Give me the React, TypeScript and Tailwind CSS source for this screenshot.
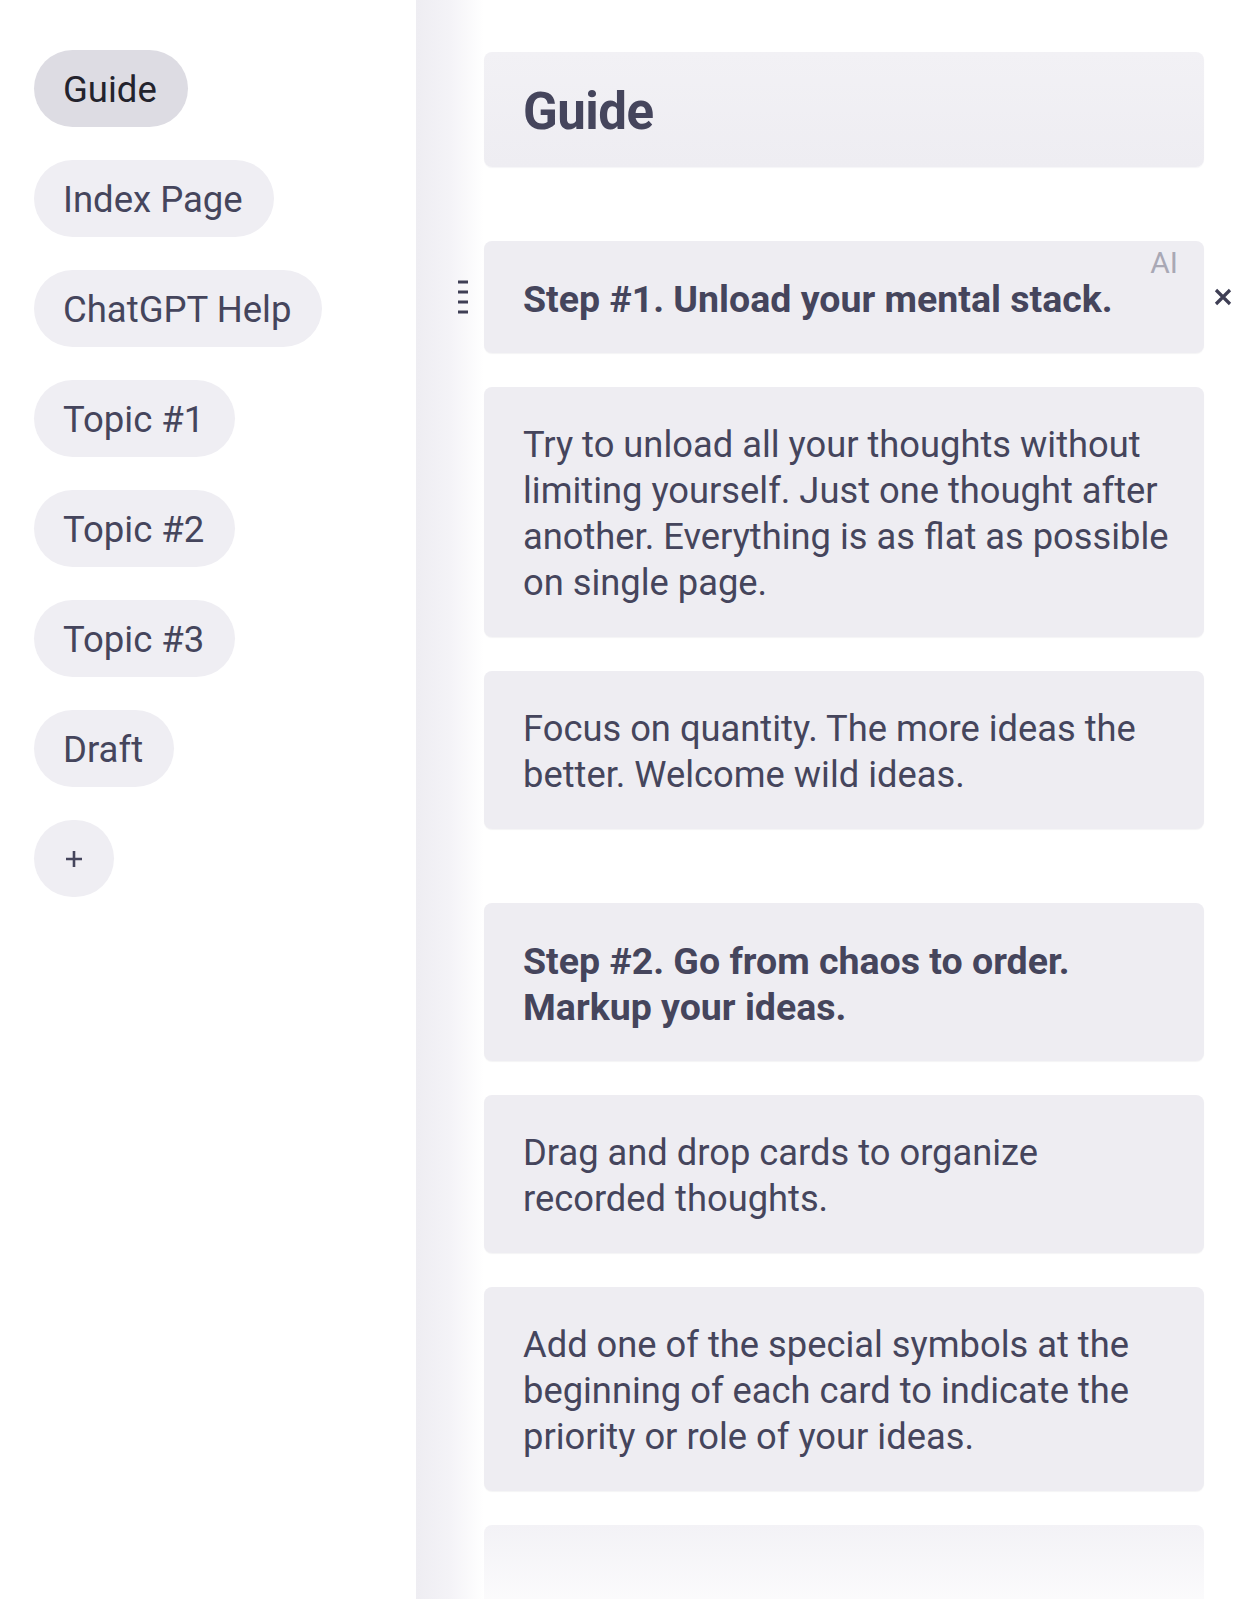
import React from 'react';

const pages = ['Guide', 'Index Page', 'ChatGPT Help', 'Topic #1', 'Topic #2', 'Topic #3', 'Draft'];

type Card = {
  lines: string[];
  bold?: boolean;
  gapBefore?: boolean;
  active?: boolean;
};

const cards: Card[] = [
  { lines: ['Step #1. Unload your mental stack.'], bold: true, gapBefore: true, active: true },
  {
    lines: [
      'Try to unload all your thoughts without',
      'limiting yourself. Just one thought after',
      'another. Everything is as flat as possible',
      'on single page.',
    ],
  },
  { lines: ['Focus on quantity. The more ideas the', 'better. Welcome wild ideas.'] },
  { lines: ['Step #2. Go from chaos to order.', 'Markup your ideas.'], bold: true, gapBefore: true },
  { lines: ['Drag and drop cards to organize', 'recorded thoughts.'] },
  {
    lines: [
      'Add one of the special symbols at the',
      'beginning of each card to indicate the',
      'priority or role of your ideas.',
    ],
  },
];

const App: React.FC = () => {
  return (
    <div className="flex h-[1599px] overflow-hidden bg-white font-['Roboto',sans-serif] text-[#45455c]">
      {/* Sidebar */}
      <aside className="w-[416px] shrink-0 pt-[50px] pl-[34px] flex flex-col items-start gap-[33px]">
        {pages.map((p, i) => (
          <button
            key={p}
            className={`h-[77px] pt-[4px] pl-[29px] pr-[31px] rounded-full text-[36.5px] leading-none ${
              i === 0 ? 'bg-[#dddce3] text-[#23232d]' : 'bg-[#efeef3] text-[#45455c]'
            }`}
          >
            {p}
          </button>
        ))}
        <button className="w-[80px] h-[77px] rounded-full bg-[#efeef3] flex items-center justify-center">
          <svg width="18" height="18" viewBox="0 0 18 18">
            <path d="M9 1v16M1 9h16" stroke="#45455c" strokeWidth="2.6" />
          </svg>
        </button>
      </aside>

      {/* Main */}
      <main className="flex-1 flex">
        <div className="w-[68px] shrink-0 bg-linear-to-r from-[#eeedf2] via-[#f4f3f7] to-white" />
        <div className="w-[720px] pt-[52px] flex flex-col">
          <div className="rounded-lg bg-linear-to-b from-[#f2f1f5] to-[#eeedf2] px-[39px] pt-[35px] pb-[31px] shadow-[0_1px_1px_rgba(60,60,90,0.05)]">
            <h1 className="text-[51px] leading-[49px] font-bold tracking-[-0.5px]">Guide</h1>
          </div>

          {cards.map((c, i) => (
            <div
              key={i}
              className={`relative rounded-lg bg-[#eeedf2] px-[39px] pt-[35px] pb-[31px] shadow-[0_1px_1px_rgba(60,60,90,0.06)] ${
                c.gapBefore ? 'mt-[74px]' : 'mt-[34px]'
              }`}
            >
              {c.active && (
                <>
                  <div className="absolute left-[-26px] top-1/2 -translate-y-1/2 flex flex-col gap-[7px]">
                    <span className="block w-[10px] h-[3px] bg-[#3f3f55]" />
                    <span className="block w-[10px] h-[3px] bg-[#3f3f55]" />
                    <span className="block w-[10px] h-[3px] bg-[#3f3f55]" />
                    <span className="block w-[10px] h-[3px] bg-[#3f3f55]" />
                  </div>
                  <span className="absolute top-[7px] right-[26px] text-[30px] leading-[30px] text-[#a9a8b5]">AI</span>
                  <button className="absolute right-[-29px] top-1/2 -translate-y-1/2 w-[20px] h-[20px] flex items-center justify-center">
                    <svg width="18" height="18" viewBox="0 0 18 18">
                      <path d="M2 2l14 14M16 2L2 16" stroke="#3f3f55" strokeWidth="3.2" />
                    </svg>
                  </button>
                </>
              )}
              <p
                className={`leading-[46px] whitespace-nowrap ${
                  c.bold ? 'text-[37.5px] font-bold' : 'text-[36.3px] font-normal'
                }`}
              >
                {c.lines.map((l, j) => (
                  <React.Fragment key={j}>
                    {l}
                    {j < c.lines.length - 1 && <br />}
                  </React.Fragment>
                ))}
              </p>
            </div>
          ))}

          <div className="mt-[34px] h-[110px] shrink-0 rounded-lg bg-linear-to-b from-[#f3f2f6] to-white" />
        </div>
      </main>
    </div>
  );
};

export default App;
